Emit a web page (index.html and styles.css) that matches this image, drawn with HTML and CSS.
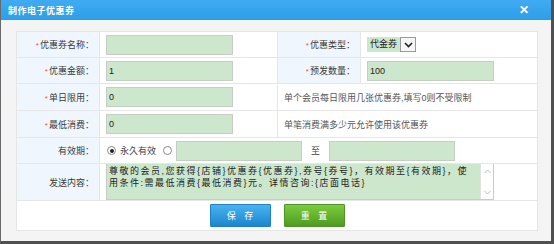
FILE: index.html
```html
<!DOCTYPE html>
<html>
  <head>
    <meta http-equiv="Content-Type" content="text/html; charset=utf-8">
    <title>制作电子优惠券</title>
    <link rel="stylesheet" href="styles.css">
  </head>
  <body>
    <div class="dialog">
      <div class="title-bar">
        <span class="title">制作电子优惠券</span>
        <span class="close">✕</span>
      </div>
      <table class="form-table">
        <colgroup>
          <col class="c-label">
          <col class="c-field">
          <col class="c-label">
          <col class="c-field2">
        </colgroup>
        <tr class="row-a">
          <td class="label"><span class="req">*</span>优惠券名称：</td>
          <td class="field"><input class="text-input" value=""></td>
          <td class="label"><span class="req">*</span>优惠类型：</td>
          <td class="field">
            <div class="select">
              <span class="select-value">代金券</span>
              <span class="select-btn">
                <svg width="9" height="6" viewBox="0 0 9 6"><path d="M1 1 L4.5 4.5 L8 1" fill="none" stroke="#222" stroke-width="1.6"/></svg>
              </span>
            </div>
          </td>
        </tr>
        <tr class="row-a">
          <td class="label"><span class="req">*</span>优惠金额：</td>
          <td class="field"><input class="text-input" value="1"></td>
          <td class="label"><span class="req">*</span>预发数量：</td>
          <td class="field"><input class="text-input" value="100"></td>
        </tr>
        <tr class="row-b">
          <td class="label"><span class="req">*</span>单日限用：</td>
          <td class="field"><input class="text-input" value="0"></td>
          <td class="note" colspan="2">单个会员每日限用几张优惠券,填写0则不受限制</td>
        </tr>
        <tr class="row-b">
          <td class="label"><span class="req">*</span>最低消费：</td>
          <td class="field"><input class="text-input" value="0"></td>
          <td class="note" colspan="2">单笔消费满多少元允许使用该优惠券</td>
        </tr>
        <tr class="row-a">
          <td class="label">有效期：</td>
          <td class="field" colspan="3">
            <div class="period">
              <span class="radio checked"></span>
              <span class="radio-text">永久有效</span>
              <span class="radio"></span>
              <input class="text-input" value="">
              <span class="to">至</span>
              <input class="text-input" value="">
            </div>
          </td>
        </tr>
        <tr class="row-c">
          <td class="label">发送内容：</td>
          <td class="field" colspan="3">
            <div class="textarea">
              <div class="textarea-text">尊敬的会员,您获得{店铺}优惠券{优惠券},券号{券号}，有效期至{有效期}，使用条件:需最低消费{最低消费}元。详情咨询:{店面电话}</div>
              <div class="scrollbar">
                <svg width="7" height="5" viewBox="0 0 7 5"><path d="M0.5 4 L3.5 1 L6.5 4" fill="none" stroke="#b8b8b8" stroke-width="1"/></svg>
                <svg width="7" height="5" viewBox="0 0 7 5"><path d="M0.5 1 L3.5 4 L6.5 1" fill="none" stroke="#b8b8b8" stroke-width="1"/></svg>
              </div>
            </div>
          </td>
        </tr>
        <tr class="row-d">
          <td class="actions" colspan="4">
            <div class="buttons">
              <span class="btn btn-save">保 存</span>
              <span class="btn btn-reset">重 置</span>
            </div>
          </td>
        </tr>
      </table>
    </div>
  </body>
</html>
```

FILE: styles.css
```css
* {
  margin: 0;
  padding: 0;
  box-sizing: border-box;
}
body {
  font-family: "Liberation Sans", "Noto Sans CJK SC", sans-serif;
  font-size: 9px;
  color: #333;
  background: #fff;
}
input:focus {
  outline: none;
}
.dialog {
  width: 554px;
  height: 244px;
  background: #f4f4f4;
  border-left: 1px solid #6a6a6a;
  border-right: 3px solid #505050;
  border-bottom: 3px solid #505050;
}
.title-bar {
  height: 20px;
  background: linear-gradient(#40abf1, #2c9ee8);
  color: #fff;
  display: flex;
  align-items: center;
  justify-content: space-between;
  padding: 0 22px 0 7px;
}
.title {
  font-weight: bold;
  font-size: 9px;
  letter-spacing: 0.5px;
}
.close {
  font-weight: bold;
  font-size: 12px;
}
.form-table {
  margin: 11px 0 0 15px;
  width: 521px;
  table-layout: fixed;
  border-collapse: collapse;
  background: #fff;
}
.form-table td {
  border: 1px solid #e6e6e6;
  vertical-align: middle;
}
.c-label {
  width: 83px;
}
.c-field {
  width: 178px;
}
.c-field2 {
  width: 177px;
}
.row-a {
  height: 26px;
}
.row-b {
  height: 27px;
}
.row-c {
  height: 37px;
}
.row-d {
  height: 30px;
}
.label {
  background: #eff6fd;
  text-align: right;
  padding-right: 5px;
  color: #3a3a3a;
  white-space: nowrap;
}
.req {
  color: #ea5a26;
  font-size: 8px;
  margin-right: 1px;
}
.field {
  padding-left: 6px;
}
.note {
  padding-left: 6px;
  color: #555;
}
.text-input {
  width: 127px;
  height: 20px;
  border: 1px solid #c5cdc5;
  background: #cde7cd;
  font-family: inherit;
  font-size: 9px;
  color: #222;
  padding: 0 2px;
  vertical-align: middle;
}
.select {
  display: flex;
  align-items: center;
  height: 15px;
}
.select-value {
  background: #cde7cd;
  height: 15px;
  line-height: 15px;
  padding: 0 3px;
  color: #222;
}
.select-btn {
  width: 16px;
  height: 15px;
  border: 1px solid #9a9a9a;
  background: #f6f6f6;
  display: flex;
  align-items: center;
  justify-content: center;
}
.period {
  display: flex;
  align-items: center;
}
.radio {
  width: 9px;
  height: 9px;
  border: 1px solid #8a8a8a;
  border-radius: 50%;
  background: #fff;
  display: flex;
  align-items: center;
  justify-content: center;
  margin-left: 1px;
}
.radio.checked::after {
  content: "";
  width: 4px;
  height: 4px;
  border-radius: 50%;
  background: #222;
}
.radio-text {
  margin: 0 6px 0 4px;
  color: #444;
}
.period .radio + .text-input {
  margin-left: 4px;
  width: 126px;
}
.to {
  width: 27px;
  text-align: center;
  color: #444;
}
.period .text-input:last-child {
  width: 126px;
}
.textarea {
  display: flex;
  width: 388px;
  height: 36px;
  background: #cde7cd;
  border: 1px solid #c5cdc5;
  border-top: 0;
}
.textarea-text {
  flex: 1;
  padding: 1px 2px;
  line-height: 12px;
  letter-spacing: 1.5px;
  color: #222;
}
.scrollbar {
  width: 13px;
  background: #fff;
  border-left: 1px solid #e2e2e2;
  display: flex;
  flex-direction: column;
  justify-content: space-between;
  align-items: center;
  padding: 5px 0 4px;
}
.actions {
  background: #fff;
}
.buttons {
  display: flex;
  justify-content: center;
  gap: 13px;
}
.btn {
  width: 61px;
  height: 23px;
  line-height: 23px;
  text-align: center;
  color: #fff;
  font-size: 9px;
  letter-spacing: 3px;
  text-indent: 3px;
  border-radius: 1px;
}
.btn-save {
  background: linear-gradient(#49b3ee, #1b86cf);
  border: 1px solid #1d82c6;
}
.btn-reset {
  background: linear-gradient(#7ccb3c, #4f9c24);
  border: 1px solid #4d9624;
}
```
